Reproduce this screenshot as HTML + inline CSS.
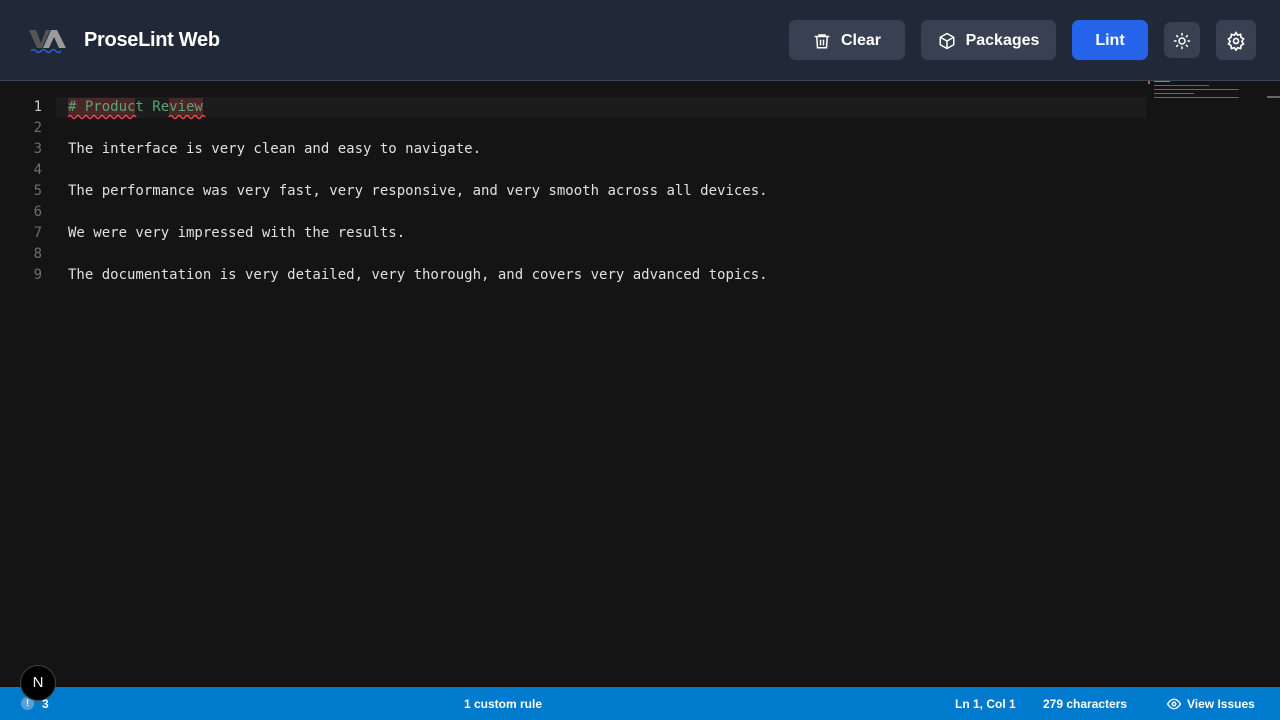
<!DOCTYPE html>
<html><head><meta charset="utf-8"><style>
*{margin:0;padding:0;box-sizing:border-box}
body{width:1280px;height:720px;background:#141414;font-family:"Liberation Sans",sans-serif;position:relative;overflow:hidden}
.hdr{position:absolute;left:0;top:0;width:1280px;height:81px;background:#1f2937;border-bottom:1px solid #3a4558}
.title{position:absolute;left:84px;top:29px;color:#fff;font-weight:bold;font-size:20px;letter-spacing:-0.3px}
.btn{position:absolute;top:20px;height:40px;border-radius:7px;background:#374151;color:#fff;font-weight:bold;font-size:16px;display:flex;align-items:center;justify-content:center;gap:10px;padding-top:2px}
.ed{position:absolute;left:0;top:81px;width:1280px;height:606px;background:#141414}
.ln{position:absolute;left:0;width:42px;text-align:right;font-family:"DejaVu Sans Mono",monospace;font-size:14px;color:#6e6e6e}
.tx{position:absolute;left:68px;font-family:"DejaVu Sans Mono",monospace;font-size:14px;color:#e0e0e0;white-space:pre}
.sb{position:absolute;left:0;top:687px;width:1280px;height:33px;background:#007acc;color:#fff;font-size:12px;font-weight:bold}
.sb span{position:absolute;top:10px}
</style></head><body>
<div class="hdr">
<svg style="position:absolute;left:28px;top:28px" width="40" height="26" viewBox="0 0 40 26"><path d="M1 2h7l5 13 5-13h4L14 20H9z" fill="#555"/><path d="M15 20L23 2h6l9 18h-7l-5-11-5 11z" fill="#9a9a9a"/><path d="M3 23q2.5-3 5 0t5 0 5 0 5 0 5 0 5 0" stroke="#2b5fd9" stroke-width="1.6" fill="none"/></svg>
<div class="title">ProseLint Web</div>
<div class="btn" style="left:789px;width:116px"><svg width="18" height="18" viewBox="0 0 24 24" fill="none" stroke="#fff" stroke-width="2" stroke-linecap="round"><path d="M3 6h18M8 6V4h8v2M5 6l1 15h12l1-15M10 11v6M14 11v6"/></svg>Clear</div>
<div class="btn" style="left:921px;width:135px"><svg width="18" height="18" viewBox="0 0 24 24" fill="none" stroke="#fff" stroke-width="2" stroke-linejoin="round"><path d="M12 2l9 5v10l-9 5-9-5V7z M3 7l9 5 9-5M12 12v10"/></svg>Packages</div>
<div class="btn" style="left:1072px;width:76px;background:#2563eb">Lint</div>
<div class="btn" style="left:1164px;width:36px;height:36px;top:22px"><svg width="18" height="18" viewBox="0 0 24 24" fill="none" stroke="#fff" stroke-width="2" stroke-linecap="round"><circle cx="12" cy="12" r="4"/><path d="M12 2v2M12 20v2M2 12h2M20 12h2M4.9 4.9l1.4 1.4M17.7 17.7l1.4 1.4M4.9 19.1l1.4-1.4M17.7 6.3l1.4-1.4"/></svg></div>
<div class="btn" style="left:1216px;width:40px"><svg width="20" height="20" viewBox="0 0 24 24" fill="none" stroke="#fff" stroke-width="2"><circle cx="12" cy="12" r="3"/><path d="M12 2l2 3 3.5-1 .5 3.5 3 2-2 3 2 3-3 2-.5 3.5-3.5-1-2 3-2-3-3.5 1L6 17.5l-3-2 2-3-2-3 3-2L6.5 4 10 5z"/></svg></div>
</div>
<div class="ed">
<div style="position:absolute;left:56px;top:16px;width:1090px;height:21px;background:#1c1c1c"></div>
<div style="position:absolute;left:68px;top:17px;width:67px;height:18px;background:#4a2626"></div>
<div style="position:absolute;left:169px;top:17px;width:34px;height:18px;background:#4a2626"></div>
<svg style="position:absolute;left:68px;top:33px" width="140" height="6"><path d="M0 3q2-3 4 0t4 0 4 0 4 0 4 0 4 0 4 0 4 0 4 0 4 0 4 0 4 0 4 0 4 0 4 0 4 0 4 0" stroke="#e5484d" stroke-width="1.5" fill="none"/><path d="M101 3q2-3 4 0t4 0 4 0 4 0 4 0 4 0 4 0 4 0 4 0" stroke="#e5484d" stroke-width="1.5" fill="none"/></svg>
<div class="ln" style="top:18px;color:#ccc">1</div><div class="tx" style="top:18px;color:#5aa37a"># Product Review</div>
<div class="ln" style="top:39px">2</div>
<div class="ln" style="top:60px">3</div><div class="tx" style="top:60px">The interface is very clean and easy to navigate.</div>
<div class="ln" style="top:81px">4</div>
<div class="ln" style="top:102px">5</div><div class="tx" style="top:102px">The performance was very fast, very responsive, and very smooth across all devices.</div>
<div class="ln" style="top:123px">6</div>
<div class="ln" style="top:144px">7</div><div class="tx" style="top:144px">We were very impressed with the results.</div>
<div class="ln" style="top:165px">8</div>
<div class="ln" style="top:186px">9</div><div class="tx" style="top:186px">The documentation is very detailed, very thorough, and covers very advanced topics.</div>
<div style="position:absolute;left:1146px;top:0;width:134px;height:606px;background:#141414"></div>
<div style="position:absolute;left:1148px;top:0;width:2px;height:3px;background:#e5484d"></div>
<div style="position:absolute;left:1154px;top:0;width:16px;height:1px;background:#4a7"></div>
<div style="position:absolute;left:1154px;top:4px;width:55px;height:1px;background:#666"></div>
<div style="position:absolute;left:1154px;top:8px;width:85px;height:1px;background:#666"></div>
<div style="position:absolute;left:1154px;top:12px;width:40px;height:1px;background:#666"></div>
<div style="position:absolute;left:1154px;top:16px;width:85px;height:1px;background:#666"></div>
<div style="position:absolute;left:1267px;top:15px;width:13px;height:2px;background:#666"></div>
</div>
<div class="sb">
<div style="position:absolute;left:21px;top:10px;width:13px;height:13px;border-radius:50%;background:#5a9fd6;color:#fff;font-size:9px;text-align:center;line-height:13px">!</div>
<span style="left:42px">3</span>
<span style="left:464px">1 custom rule</span>
<span style="left:955px">Ln 1, Col 1</span>
<span style="left:1043px">279 characters</span>
<svg style="position:absolute;left:1167px;top:11px" width="14" height="12" viewBox="0 0 24 20" fill="none" stroke="#fff" stroke-width="2.4"><path d="M1 10s4-8 11-8 11 8 11 8-4 8-11 8S1 10 1 10z"/><circle cx="12" cy="10" r="3"/></svg>
<span style="left:1187px">View Issues</span>
</div>
<div style="position:absolute;left:20px;top:665px;width:36px;height:36px;border-radius:50%;background:#000;border:1.5px solid #444;color:#fff;font-size:15px;text-align:center;line-height:33px">N</div>
</body></html>
